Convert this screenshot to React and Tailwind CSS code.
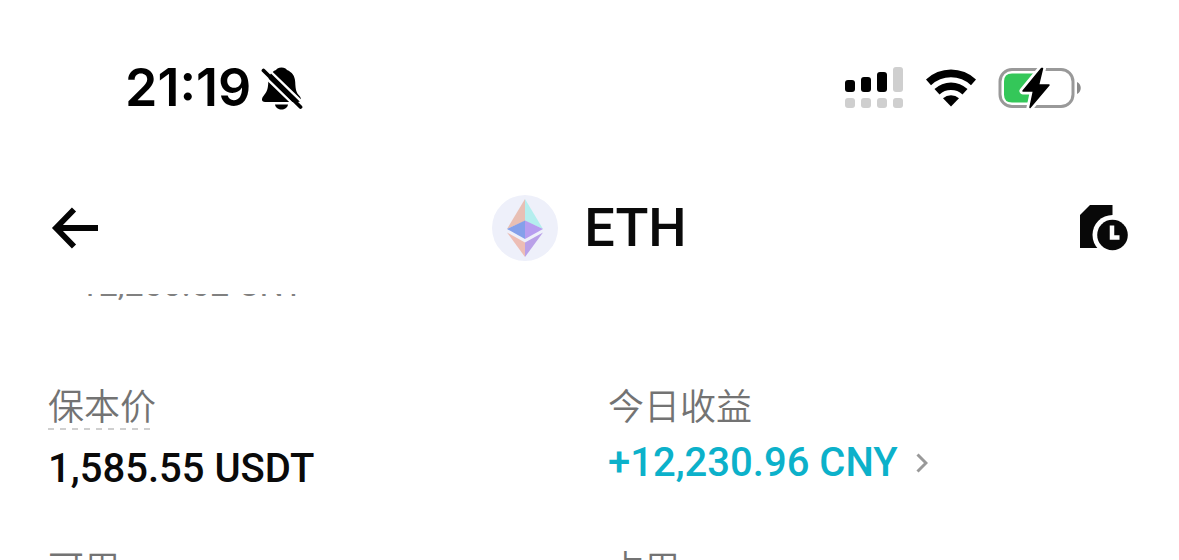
function MutedBell() {
  return (
    <svg viewBox="0 0 42 44" className="h-11 w-[42px]" aria-label="静音" role="img">
      <path d="M20.500 1.500C17.500 1.500 16 2.500 15 4C10 6 7.300 10 7.300 16C7 24 5.500 26 2.500 30C0 33 .8 36 4 36H37C40 36 41 33 38.500 30C35.500 27 34.500 24 34.200 16C34 10 31 6 26 4C25 2.500 23.500 1.500 20.500 1.500Z" fill="#000" />
      <path d="M14 38.500H27C26.500 42 23.500 43.500 20.500 43.500C17.500 43.500 14.500 42 14 38.500Z" fill="#000" />
      <path d="M5 1L43 38M-1 6L37 43" stroke="#fff" strokeWidth="2.400" />
      <path d="M2.500 4.500L39.500 41" stroke="#000" strokeWidth="3.800" strokeLinecap="round" />
    </svg>
  );
}

function Signal() {
  return (
    <svg viewBox="0 0 60 42" className="h-[42px] w-[60px]" aria-label="信号" role="img">
      <g fill="#000">
        <rect x="1" y="13" width="10" height="12" rx="3" />
        <rect x="17" y="10" width="10" height="15" rx="3" />
        <rect x="33" y="5" width="10" height="20" rx="3" />
      </g>
      <g fill="#cfcfcf">
        <rect x="49" y="0" width="10" height="25" rx="3" />
        <rect x="1" y="31" width="10" height="10" rx="3" />
        <rect x="17" y="31" width="10" height="10" rx="3" />
        <rect x="33" y="31" width="10" height="10" rx="3" />
        <rect x="49" y="31" width="10" height="10" rx="3" />
      </g>
    </svg>
  );
}

function Wifi() {
  return (
    <svg viewBox="0 0 50 38" className="h-[38px] w-[50px]" aria-label="无线网络" role="img">
      <path d="M0 10.500A36 36 0 0 1 50 10.500L45 16.300A29 29 0 0 0 5 16.300Z" />
      <path d="M8.500 20A24 24 0 0 1 41.500 20L36.500 25.600A17 17 0 0 0 13.500 25.600Z" />
      <path d="M17 29.200A12 12 0 0 1 33 29.200L25 37.500Z" />
    </svg>
  );
}

function Battery() {
  return (
    <svg viewBox="0 0 84 42" className="h-[42px] w-[84px]" aria-label="正在充电" role="img">
      <rect x="2" y="2.500" width="73" height="37" rx="12" fill="none" stroke="#999" strokeWidth="3" />
      <path d="M79 15C84 17 84 25 79 27Z" fill="#8a8a8a" />
      <path d="M14 6.500H38V35.500H14Q6 35.500 6 27.500V14.500Q6 6.500 14 6.500Z" fill="#34c759" />
      <path d="M43.500 1.500L25 24H35.500L32 40.500L51 18H40.500L44.500 1.500Z" fill="#000" stroke="#fff" strokeWidth="7" strokeLinejoin="round" />
      <path d="M43.500 1.500L25 24H35.500L32 40.500L51 18H40.500L44.500 1.500Z" fill="#000" stroke="#000" strokeWidth="1.500" strokeLinejoin="round" />
    </svg>
  );
}

function EthLogo() {
  return (
    <svg viewBox="0 0 66 66" className="size-[66px]" aria-hidden="true">
      <circle cx="33" cy="33" r="33" fill="#eef0fa" />
      <path d="M33 4L15 34L33 26Z" fill="#e8bfb4" />
      <path d="M33 4L51 34L33 26Z" fill="#b4eeee" />
      <path d="M33 25.500L15 34L33 44Z" fill="#84a0ea" />
      <path d="M33 25.500L51 34L33 44Z" fill="#b79df0" />
      <path d="M15 37.500L33 47.500V62Z" fill="#edbdb5" />
      <path d="M51 37.500L33 47.500V62Z" fill="#b9a0e8" />
    </svg>
  );
}

function BackArrow() {
  return (
    <svg viewBox="0 0 48 42" className="h-[42px] w-12" fill="none" stroke="#050505" strokeWidth="5.800" aria-hidden="true">
      <path d="M23 2.500L5 21L23 39.500M5 21H47" />
    </svg>
  );
}

function HistoryIcon() {
  return (
    <svg viewBox="0 0 48 46" className="h-[46px] w-12" aria-hidden="true">
      <path d="M10 0H32.500V43H0V10Z" fill="#080808" />
      <circle cx="32.500" cy="30" r="20" fill="#fff" />
      <circle cx="32.500" cy="30" r="15.300" fill="#080808" />
      <path d="M32 20.500V32.500H39.500" fill="none" stroke="#fff" strokeWidth="4.500" />
    </svg>
  );
}

function Label({ children }) {
  return (
    <dt className="text-4xl leading-[44px] font-[350] text-[#737373]">{children}</dt>
  );
}

export default function App() {
  return (
    <div className="flex h-screen flex-col overflow-hidden bg-white font-['Roboto','Noto_Sans_CJK_SC',sans-serif] text-[#0a0a0a]">
      <div className="flex shrink-0 items-center justify-between pt-[60px] pr-[97px] pl-[125px]">
        <div className="flex items-center gap-[10px]">
          <time className="font-['Inter',sans-serif] text-[52px] leading-[56px] font-semibold text-black">21:19</time>
          <MutedBell />
        </div>
        <div className="flex items-center gap-[22px]">
          <Signal />
          <Wifi />
          <Battery />
        </div>
      </div>

      <header className="grid shrink-0 grid-cols-[1fr_auto_1fr] items-center px-[51px] pt-[79px] pb-6">
        <button type="button" aria-label="返回" className="justify-self-start">
          <BackArrow />
        </button>
        <div className="flex items-center gap-[26px]">
          <EthLogo />
          <h1 className="text-[54px] leading-[66px] font-medium">ETH</h1>
        </div>
        <button type="button" aria-label="历史记录" className="justify-self-end">
          <HistoryIcon />
        </button>
      </header>

      <main className="min-h-0 flex-1 overflow-hidden px-12 pt-[9px]">
        <div className="h-4 overflow-hidden">
          <p className="-mt-7 pl-1 text-[34px] leading-9 text-[#808080]">≈ 12,260.62 CNY</p>
        </div>
        <dl className="grid grid-cols-[560px_1fr] gap-y-[54px] pt-[76px]">
          <div>
            <Label>
              <button type="button" className="block bg-[repeating-linear-gradient(90deg,#cfcfcf_0_6px,transparent_6px_12px)] bg-[length:102px_2px] bg-bottom-left bg-no-repeat">
                保本价
              </button>
            </Label>
            <dd className="pt-[14px] text-[40px] leading-[50px] font-medium">1,585.55 USDT</dd>
          </div>
          <div>
            <Label>今日收益</Label>
            <dd className="pt-2">
              <a href="#profit" className="flex items-center gap-[18px] text-[40px] leading-[50px] font-medium text-[#0cb1ca]">
                +12,230.96 CNY
                <svg viewBox="0 0 12 20" className="h-5 w-3" fill="none" stroke="#999" strokeWidth="3" aria-hidden="true">
                  <path d="M1.500 1.500L10 10L1.500 18.500" />
                </svg>
              </a>
            </dd>
          </div>
          <div>
            <Label>可用</Label>
          </div>
          <div>
            <Label>占用</Label>
          </div>
        </dl>
      </main>
    </div>
  );
}
